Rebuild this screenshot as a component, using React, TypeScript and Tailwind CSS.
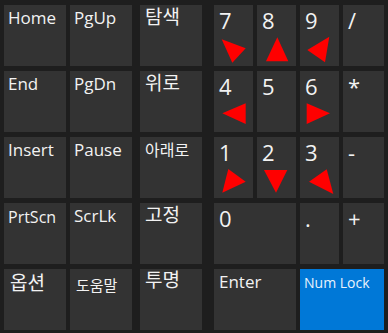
import type { ReactNode } from "react";

type KeyProps = {
  children?: ReactNode;
  className?: string;
  text?: string;
  arrow?: string;
};

function Key({ children, className = "", text = "text-[17px] leading-[20px] pt-[3px] pl-1", arrow }: KeyProps) {
  return (
    <div className={`relative bg-[#333333] text-[#f2f2f2] ${className}`}>
      <div className={text}>{children}</div>
      {arrow ? (
        <svg className="absolute inset-0 h-full w-full" viewBox="0 0 39 61" preserveAspectRatio="xMinYMin meet">
          <polygon points={arrow} fill="#ff0000" />
        </svg>
      ) : null}
    </div>
  );
}

const kor = "text-[19px] leading-[22px] pl-[5px]";
const num = "text-[22px] leading-[26px] pt-[2px] pl-[5px]";

export default function App() {
  return (
    <div
      className="flex h-[333px] w-[388px] bg-[#1e1e1e] pl-1 pt-[5px]"
      style={{ fontFamily: '"Segoe UI", "Open Sans", "Noto Sans CJK KR", sans-serif' }}
    >
      <div className="grid grid-cols-[62px_62px] grid-rows-[repeat(5,61px)] gap-x-1 gap-y-[5px]">
        <Key>Home</Key>
        <Key>PgUp</Key>
        <Key>End</Key>
        <Key>PgDn</Key>
        <Key>Insert</Key>
        <Key>Pause</Key>
        <Key text="text-[16px] leading-[20px] pt-[4px] pl-1">PrtScn</Key>
        <Key>ScrLk</Key>
        <Key text="text-[19px] leading-[22px] pt-[3px] pl-[6px]">옵션</Key>
        <Key text="text-[15px] leading-[20px] pt-[6px] pl-[6px]">도움말</Key>
      </div>

      <div className="ml-2 grid grid-cols-[62px] grid-rows-[repeat(5,61px)] gap-y-[5px]">
        <Key text={`${kor} pt-[1px]`}>탐색</Key>
        <Key text={`${kor} pt-[1px]`}>위로</Key>
        <Key text="text-[16px] leading-[20px] pt-[3px] pl-[5px]">아래로</Key>
        <Key text={`${kor} pt-[1px]`}>고정</Key>
        <Key text={`${kor} pt-0`}>투명</Key>
      </div>

      <div className="ml-3 grid grid-cols-[39px_39px_39px_41px] grid-rows-[repeat(5,61px)] gap-x-1 gap-y-[5px]">
        <Key text={num} arrow="7.7,34.3 31.7,43.3 18.3,57.7">7</Key>
        <Key text={num} arrow="20.3,32.3 9,56.3 31.3,56.3">8</Key>
        <Key text={num} arrow="7.3,45 29.3,31.7 25,57.3">9</Key>
        <Key text={num}>/</Key>
        <Key text={num} arrow="8.3,42.3 31.7,32.3 31.7,53">4</Key>
        <Key text={num}>5</Key>
        <Key text={num} arrow="6.7,32.3 6.7,53 30,42.3">6</Key>
        <Key text={num}>*</Key>
        <Key text={num} arrow="14.3,32 31.7,44.7 8.3,55.7">1</Key>
        <Key text={num} arrow="7,33 30.3,33 19,55.7">2</Key>
        <Key text={num} arrow="9,44.7 26.7,32.3 33.3,57">3</Key>
        <Key text={num}>-</Key>
        <Key className="col-span-2" text={num}>0</Key>
        <Key text={num}>.</Key>
        <Key text={num}>+</Key>
        <Key className="col-span-2" text="text-[17px] leading-[20px] pt-[3px] pl-[5px]">Enter</Key>
        <div className="col-span-2 bg-[#0078d7] pl-1 pt-[5px] text-[14px] leading-[18px] text-[#e8f2fc]">Num Lock</div>
      </div>
    </div>
  );
}
